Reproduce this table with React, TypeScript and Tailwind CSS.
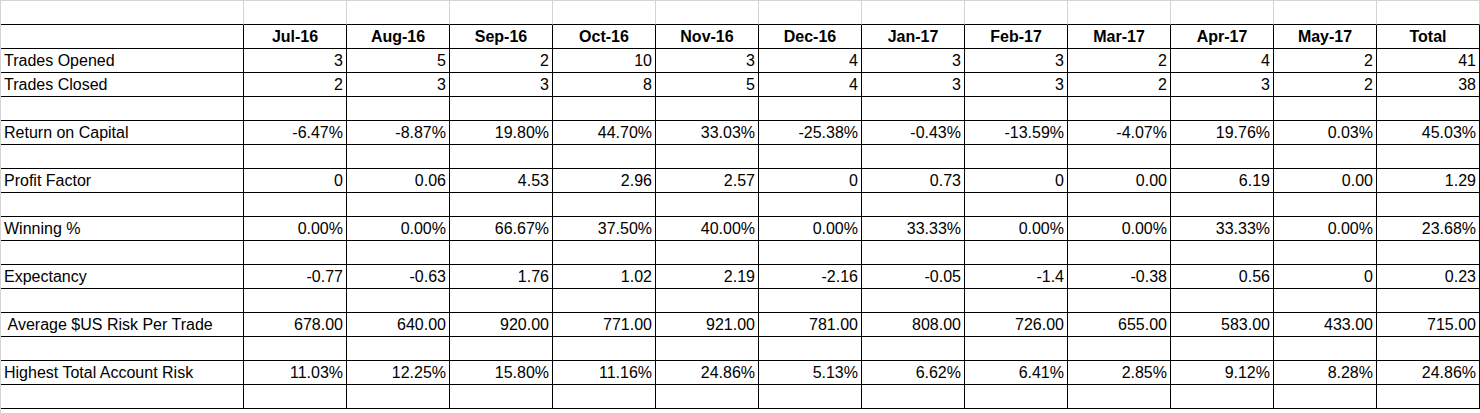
const months = [
  'Jul-16',
  'Aug-16',
  'Sep-16',
  'Oct-16',
  'Nov-16',
  'Dec-16',
  'Jan-17',
  'Feb-17',
  'Mar-17',
  'Apr-17',
  'May-17',
  'Total',
];

type Row = { label: string; values: string[] } | null;

const rows: Row[] = [
  { label: 'Trades Opened', values: ['3', '5', '2', '10', '3', '4', '3', '3', '2', '4', '2', '41'] },
  { label: 'Trades Closed', values: ['2', '3', '3', '8', '5', '4', '3', '3', '2', '3', '2', '38'] },
  null,
  {
    label: 'Return on Capital',
    values: ['-6.47%', '-8.87%', '19.80%', '44.70%', '33.03%', '-25.38%', '-0.43%', '-13.59%', '-4.07%', '19.76%', '0.03%', '45.03%'],
  },
  null,
  {
    label: 'Profit Factor',
    values: ['0', '0.06', '4.53', '2.96', '2.57', '0', '0.73', '0', '0.00', '6.19', '0.00', '1.29'],
  },
  null,
  {
    label: 'Winning %',
    values: ['0.00%', '0.00%', '66.67%', '37.50%', '40.00%', '0.00%', '33.33%', '0.00%', '0.00%', '33.33%', '0.00%', '23.68%'],
  },
  null,
  {
    label: 'Expectancy',
    values: ['-0.77', '-0.63', '1.76', '1.02', '2.19', '-2.16', '-0.05', '-1.4', '-0.38', '0.56', '0', '0.23'],
  },
  null,
  {
    label: ' Average $US Risk Per Trade',
    values: ['678.00', '640.00', '920.00', '771.00', '921.00', '781.00', '808.00', '726.00', '655.00', '583.00', '433.00', '715.00'],
  },
  null,
  {
    label: 'Highest Total Account Risk',
    values: ['11.03%', '12.25%', '15.80%', '11.16%', '24.86%', '5.13%', '6.62%', '6.41%', '2.85%', '9.12%', '8.28%', '24.86%'],
  },
  null,
];

const gridCols = 'grid grid-cols-[243px_repeat(12,103px)]';
const cell = 'h-6 border-r border-b border-black leading-[23px] whitespace-pre';

export default function App() {
  return (
    <div
      className="min-h-[413px] w-[1480px] border-l border-[#d4d4d4] bg-white text-[16px] text-black"
      style={{ fontFamily: '"Liberation Sans", Arial, sans-serif' }}
    >
      {/* spreadsheet grid row above the table */}
      <div className={`${gridCols} border-t border-[#d4d4d4]`}>
        {Array.from({ length: 13 }).map((_, i) => (
          <div key={i} className="h-6 border-r border-b border-[#d4d4d4] border-b-black" />
        ))}
      </div>

      <div className={gridCols}>
        <div className={cell} />
        {months.map((m) => (
          <div key={m} className={`${cell} text-center font-bold`}>
            {m}
          </div>
        ))}
      </div>

      {rows.map((row, r) => (
        <div key={r} className={gridCols}>
          <div className={`${cell} pl-[3px]`}>{row ? row.label : ''}</div>
          {(row ? row.values : Array.from({ length: 12 }, () => '')).map((v, i) => (
            <div key={i} className={`${cell} pr-[3px] text-right`}>
              {v}
            </div>
          ))}
        </div>
      ))}
    </div>
  );
}
